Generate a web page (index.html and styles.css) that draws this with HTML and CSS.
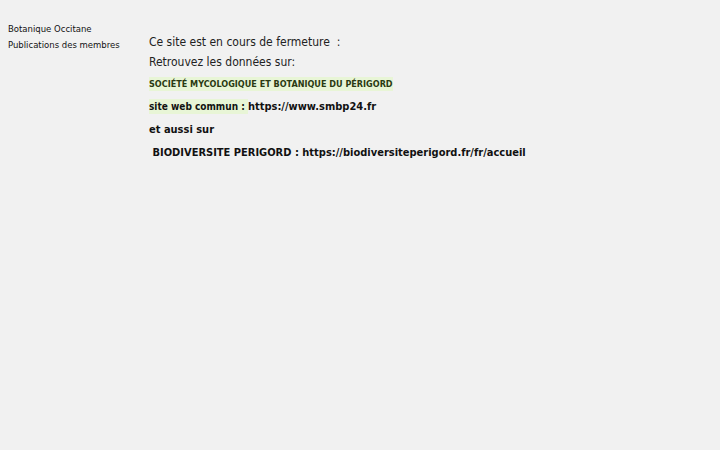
FILE: index.html
```html
<!DOCTYPE html>
<html lang="fr">
<head>
    <meta charset="UTF-8">
    <meta name="viewport" content="width=device-width, initial-scale=1.0">
    <title>Botanique Occitane</title>
    <link rel="stylesheet" href="styles.css">
</head>
<body>
    <div class="page">
        <ul class="menu">
            <li><a href="#">Botanique Occitane</a></li>
            <li><a href="#">Publications des membres</a></li>
        </ul>

        <div class="content">
            <p class="intro">Ce site est en cours de fermeture &nbsp;:</p>
            <p class="intro">Retrouvez les données sur:</p>
            <p class="society"><span class="mark">SOCIÉTÉ MYCOLOGIQUE ET BOTANIQUE DU PÉRIGORD</span></p>
            <p class="bold"><span class="mark">site web commun : </span><span class="url">https://www.smbp24.fr</span></p>
            <p class="bold big">et aussi sur</p>
            <p class="bold big">&nbsp;BIODIVERSITE PERIGORD : https://biodiversiteperigord.fr/fr/accueil</p>
        </div>
    </div>
</body>
</html>
```

FILE: styles.css
```css
body {
    font-family: "DejaVu Sans", Verdana, sans-serif;
    background-color: #f1f1f1;
    color: #222;
    margin: 0;
    padding: 0;
}

.page {
    display: flex;
    padding-top: 21px;
}

.menu {
    list-style: none;
    margin: 0;
    padding: 0 0 0 8px;
    width: 141px;
    flex-shrink: 0;
    font-size: 8.5px;
    line-height: 16px;
}

.menu a {
    color: #111;
    text-decoration: none;
}

.content {
    font-family: "DejaVu Sans Condensed", "DejaVu Sans", sans-serif;
    font-stretch: condensed;
    padding-top: 11px;
}

.content p {
    margin: 0;
}

.intro {
    font-size: 12px;
    line-height: 20px;
}

.society {
    font-size: 9px;
    font-weight: bold;
    color: #2a3a12;
    margin-top: 2px !important;
    line-height: 21px;
}

.mark {
    background-color: #e8f5d6;
    padding: 2px 0;
}

.bold {
    font-size: 10px;
    font-weight: bold;
    color: #111;
    line-height: 23px;
}

.url {
    font-size: 11px;
}

.big {
    font-size: 11px;
}
```
